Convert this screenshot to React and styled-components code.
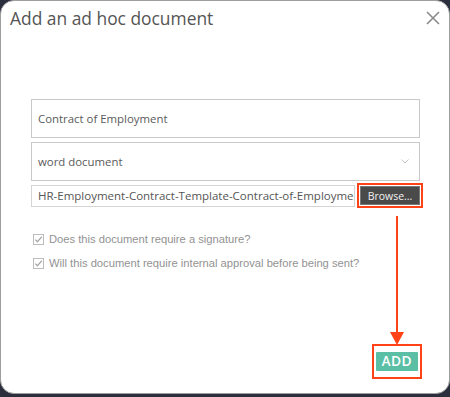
import styled, { createGlobalStyle } from 'styled-components';

const GlobalStyle = createGlobalStyle`
  html, body {
    margin: 0;
    padding: 0;
    background: #2b2e3c;
  }
`;

export default function App() {
  return (
    <>
      <GlobalStyle />
      <Dialog>
        <Header>
          <Title>Add an ad hoc document</Title>
          <CloseButton aria-label="close">
            <svg width="14" height="14" viewBox="0 0 14 14">
              <path d="M1 1L13 13M13 1L1 13" stroke="#8a8a8a" strokeWidth="1.6" />
            </svg>
          </CloseButton>
        </Header>

        <Form>
          <TextField>Contract of Employment</TextField>
          <TextField>
            word document
            <svg width="8" height="5" viewBox="0 0 8 5">
              <path d="M0.5 0.5L4 4L7.5 0.5" fill="none" stroke="#c4c4c4" strokeWidth="1" />
            </svg>
          </TextField>
          <FileRow>
            <FileName>HR-Employment-Contract-Template-Contract-of-Employment.docx</FileName>
            <Highlight $pad="1px">
              <BrowseButton>Browse...</BrowseButton>
            </Highlight>
          </FileRow>

          <Checks>
            <CheckRow>
              <CheckBox />
              Does this document require a signature?
            </CheckRow>
            <CheckRow>
              <CheckBox />
              Will this document require internal approval before being sent?
            </CheckRow>
          </Checks>
        </Form>

        <Footer>
          <Highlight $pad="6px 2px">
            <AddButton>ADD</AddButton>
          </Highlight>
        </Footer>

        <Arrow width="16" height="130" viewBox="0 0 16 130">
          <line x1="8" y1="0" x2="8" y2="118" stroke="#ff4317" strokeWidth="2" />
          <path d="M1 116L15 116L8 129Z" fill="#ff4317" />
        </Arrow>
      </Dialog>
    </>
  );
}

function CheckBox() {
  return (
    <Box>
      <svg width="11" height="11" viewBox="0 0 11 11">
        <rect x="0.5" y="0.5" width="10" height="10" fill="#fff" stroke="#bdbdbd" />
        <path d="M2.3 5.6L4.4 7.8L8.9 2.6" fill="none" stroke="#a8a8a8" strokeWidth="1.3" />
      </svg>
    </Box>
  );
}

const Dialog = styled.div`
  position: relative;
  box-sizing: border-box;
  width: 450px;
  height: 394px;
  background: #fff;
  border: 1px solid #9e9e9e;
  border-radius: 14px;
  display: flex;
  flex-direction: column;
  font-family: 'Open Sans', sans-serif;
  overflow: hidden;
`;

const Header = styled.div`
  display: flex;
  justify-content: space-between;
  align-items: flex-start;
  padding: 3px 9px 0 9px;
`;

const Title = styled.h2`
  margin: 0;
  font-size: 17.4px;
  font-weight: 400;
  line-height: 28px;
  color: #555;
`;

const CloseButton = styled.button`
  border: 0;
  background: none;
  padding: 0;
  margin-top: 7px;
  display: flex;
`;

const Form = styled.div`
  display: flex;
  flex-direction: column;
  gap: 4px;
  margin: 67px 29px 0 30px;
`;

const TextField = styled.div`
  box-sizing: border-box;
  height: 39px;
  border: 1px solid #c9c9c9;
  padding: 0 10px 0 6px;
  display: flex;
  align-items: center;
  justify-content: space-between;
  font-size: 11.4px;
  color: #5a5a5a;
`;

const FileRow = styled.div`
  display: flex;
  align-items: center;
  gap: 2px;
  margin: -2px -3px 0 0;
`;

const FileName = styled.div`
  flex: 1;
  min-width: 0;
  box-sizing: border-box;
  height: 22px;
  border: 1px solid #d4d4d4;
  padding: 0 0 0 6px;
  font-size: 11.5px;
  line-height: 20px;
  color: #555;
  white-space: nowrap;
  overflow: hidden;
`;

const Highlight = styled.div`
  border: 2px solid #ff4317;
  padding: ${(p) => p.$pad};
  display: flex;
`;

const BrowseButton = styled.button`
  box-sizing: border-box;
  width: 60px;
  height: 19px;
  border: 1px solid #777;
  background: #4a4a4a;
  color: #f2f2f2;
  font-family: 'Open Sans', sans-serif;
  font-size: 10.5px;
  padding: 0;
`;

const Checks = styled.div`
  display: flex;
  flex-direction: column;
  gap: 12px;
  margin-top: 21px;
  padding-left: 2px;
`;

const CheckRow = styled.label`
  display: flex;
  align-items: center;
  gap: 5px;
  font-family: 'Liberation Sans', Arial, sans-serif;
  font-size: 11.2px;
  color: #929292;
`;

const Box = styled.span`
  display: flex;
`;

const Footer = styled.div`
  margin-top: auto;
  display: flex;
  justify-content: flex-end;
  padding: 0 27px 14px 0;
`;

const AddButton = styled.button`
  width: 42px;
  height: 19px;
  border: 0;
  border-radius: 1px;
  background: #5bbfa6;
  color: #fff;
  font-family: Lato, 'Liberation Sans', sans-serif;
  font-weight: 700;
  font-size: 12.5px;
  letter-spacing: 1px;
  padding: 0;
`;

const Arrow = styled.svg`
  position: absolute;
  left: 388px;
  top: 215px;
`;
